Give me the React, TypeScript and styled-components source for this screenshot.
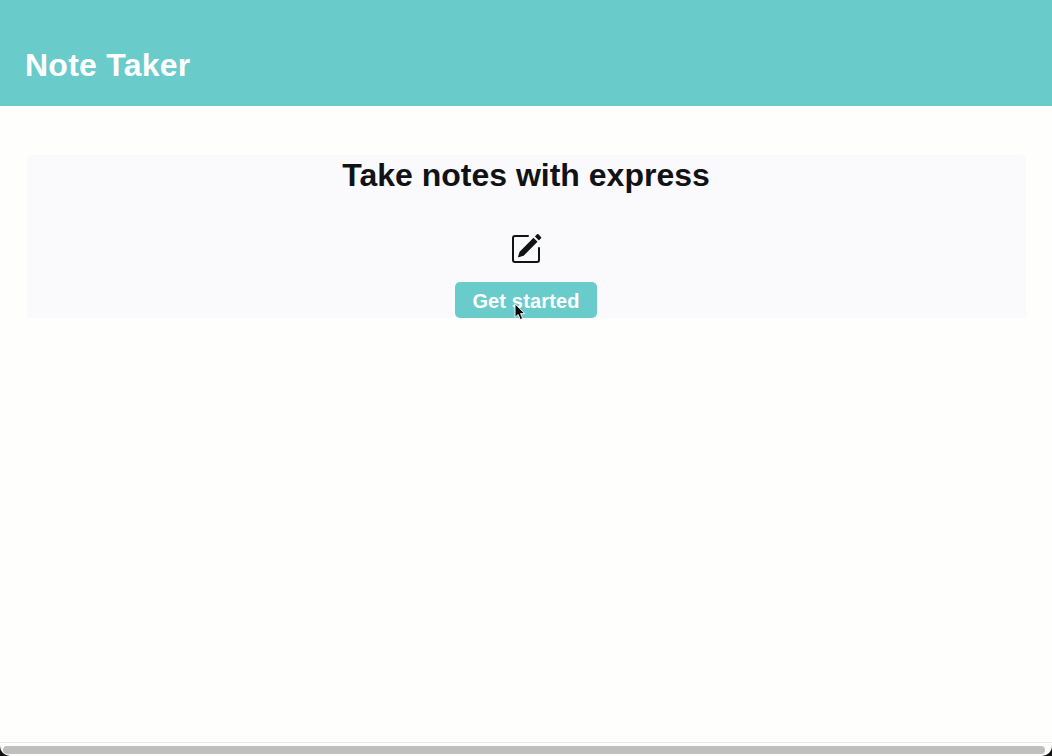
import React from "react";
import styled, { createGlobalStyle } from "styled-components";

const GlobalStyle = createGlobalStyle`
  * { box-sizing: border-box; }
  html, body { margin: 0; background: #111; overflow: hidden; }
  body { font-family: "Liberation Sans", Arial, sans-serif; color: #111213; }
`;

const Window = styled.div`
  display: flex;
  flex-direction: column;
  width: 100%;
  height: 100vh;
  overflow: hidden;
  background: #fefefc;
  border-radius: 0 0 10px 10px;
`;

const Header = styled.header`
  flex: none;
  height: 106px;
  padding: 46px 25px 0;
  background: #6acbcb;
`;

const Brand = styled.h1`
  margin: 0;
  font-size: 32px;
  line-height: 38px;
  font-weight: 700;
  letter-spacing: 0.25px;
  color: #fff;
  white-space: nowrap;
`;

const Content = styled.main`
  flex: 1;
  padding: 49px 26px 0 27px;
`;

const Hero = styled.section`
  display: flex;
  flex-direction: column;
  align-items: center;
  height: 163px;
  padding-right: 1px;
  border-radius: 5px 5px 0 0;
  background: #fafafd;
`;

const Title = styled.h2`
  margin: 1px 0 39px;
  font-size: 32px;
  line-height: 38px;
  font-weight: 700;
  white-space: nowrap;
`;

const NoteIcon = styled.svg`
  flex: none;
  display: block;
  width: 32px;
  height: 32px;
  margin-bottom: 17px;
`;

const StartButton = styled.button`
  position: relative;
  width: 142px;
  height: 36px;
  padding: 3px 0 0;
  border: 0;
  border-radius: 5px;
  background: #6acbcb;
  color: #fff;
  font: 700 20px/33px "Liberation Sans", Arial, sans-serif;
  letter-spacing: 0.15px;
  white-space: nowrap;
`;

const Pointer = styled.svg`
  position: absolute;
  left: 59px;
  top: 21px;
  width: 12px;
  height: 18px;
`;

const ScrollTrack = styled.div`
  flex: none;
  height: 14px;
  padding: 3px 7px 2px 3px;
  border-top: 1px solid #e6e8e9;
`;

const ScrollThumb = styled.div`
  height: 8px;
  border-radius: 4px;
  background: #bfbfbf;
`;

export default function App() {
  return (
    <Window>
      <GlobalStyle />
      <Header>
        <Brand>Note Taker</Brand>
      </Header>
      <Content>
        <Hero>
          <Title>Take notes with express</Title>
          <NoteIcon viewBox="0 0 16 16" fill="currentColor">
            <path d="M15.502 1.94a.5.5 0 0 1 0 .706L14.459 3.69l-2-2L13.502.646a.5.5 0 0 1 .707 0l1.293 1.293zm-1.75 2.456-2-2L4.939 9.21a.5.5 0 0 0-.121.196l-.805 2.414a.25.25 0 0 0 .316.316l2.414-.805a.5.5 0 0 0 .196-.12l6.813-6.814z" />
            <path
              fillRule="evenodd"
              d="M1 13.5A1.5 1.5 0 0 0 2.5 15h11a1.5 1.5 0 0 0 1.5-1.5v-6a.5.5 0 0 0-1 0v6a.5.5 0 0 1-.5.5h-11a.5.5 0 0 1-.5-.5v-11a.5.5 0 0 1 .5-.5H9a.5.5 0 0 0 0-1H2.5A1.5 1.5 0 0 0 1 2.5v11z"
            />
          </NoteIcon>
          <StartButton>
            Get started
            <Pointer viewBox="0 0 13 20">
              <path
                d="M1 1v15l3.4-3.2 2.4 5.6 2.7-1.2-2.4-5.4h4.7z"
                fill="#050505"
                stroke="#fff"
                strokeWidth="1"
              />
            </Pointer>
          </StartButton>
        </Hero>
      </Content>
      <ScrollTrack>
        <ScrollThumb />
      </ScrollTrack>
    </Window>
  );
}
